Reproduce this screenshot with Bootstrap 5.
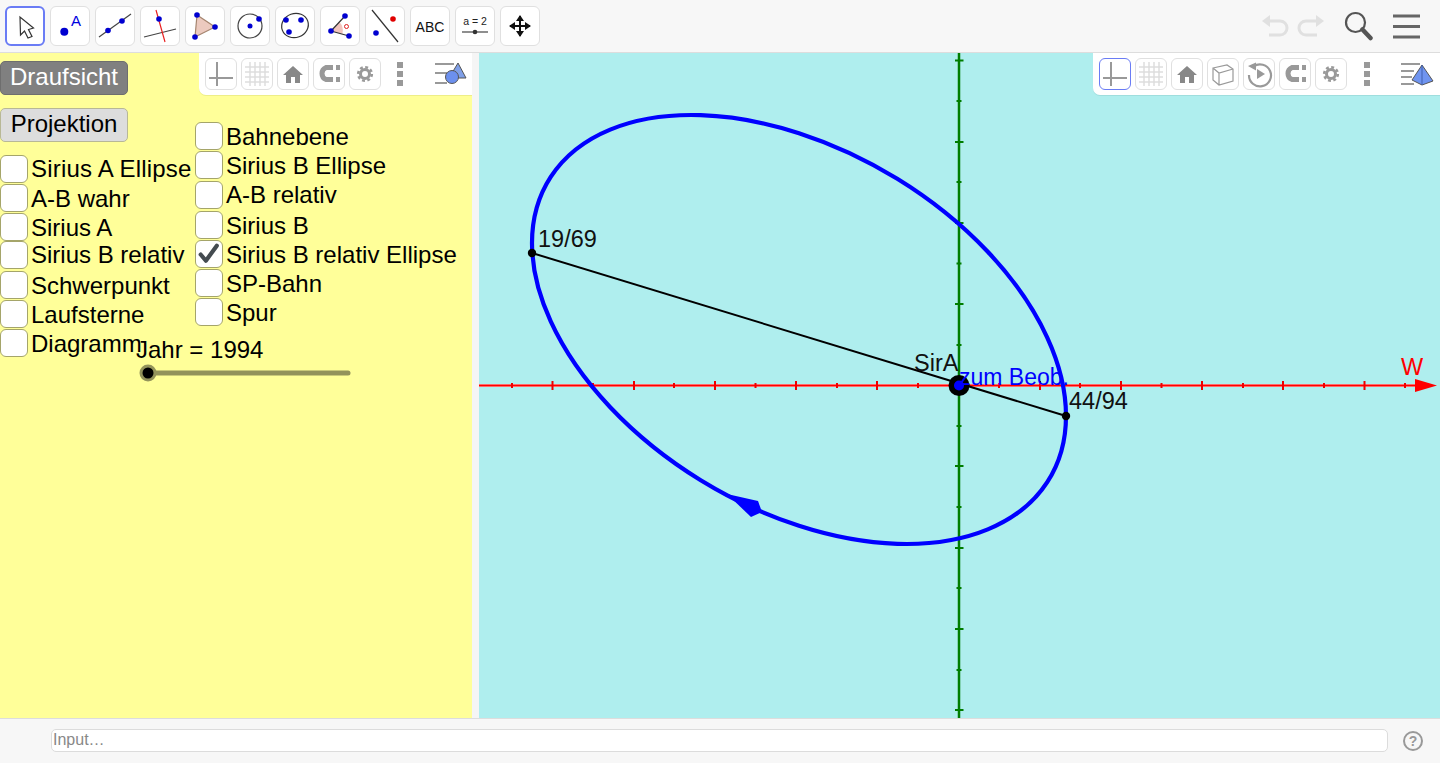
<!DOCTYPE html>
<html lang="de">
<head>
<meta charset="utf-8">
<title>Sirius</title>
<link href="https://cdn.jsdelivr.net/npm/bootstrap@5.3.0/dist/css/bootstrap.min.css" rel="stylesheet">
<style>
html,body{height:763px;overflow:hidden;margin:0;font-family:"Liberation Sans",Arial,sans-serif;color:#000}
.app-shell{height:763px}
.top-bar{height:53px;background:#f7f7f7;border-bottom:1px solid #ddd;padding:6px 5px 0;flex:none}
.tool-row{gap:5px}
.tool-btn{width:40px;height:40px;padding:0;background:#fff;border:1px solid #e0e0e0;border-radius:6px;flex:none;display:block}
.tool-btn svg{display:block}
.tool-btn.is-on{border:2px solid #6a7cf5}
.tool-btn.is-on svg{margin:-1px}
.top-right{margin-left:auto;margin-right:13px;height:40px}
.undo-ico{margin-right:8px}
.search-ico{margin-left:18px}
.menu-ico{margin-left:19px}
.work-area{height:665px;flex:none}
.algebra{width:472px;background:#ffff99;flex:none;overflow:hidden}
.splitter{width:7px;background:#f5f5f5;flex:none}
.graphics{flex:1 1 auto;background:#afeeee;overflow:hidden}
.graphics svg.plot{display:block;width:961px;height:665px}
.plot text{font-family:"Liberation Sans",Arial,sans-serif;font-size:23.5px}
.plot text.beob{font-size:23px}
.dock-bar{position:absolute;top:0;right:0;height:42px;background:#fff;border-bottom-left-radius:7px;padding:5px 0 0 6px;display:flex;gap:4px}
.dock-left{width:273px;box-shadow:0 1px 0 #eeee88}
.dock-right{width:347px;box-shadow:0 1px 0 #9fdede}
.dock-btn{width:32px;height:32px;background:#fff;border:1px solid #e0e0e0;border-radius:6px;padding:0;flex:none}
.dock-btn svg{display:block;margin:-1px}
.dock-btn.is-on{border-color:#6a7cf5}
.dock-view{position:absolute;top:5px;right:4px}
.dock-left .dots-pos{position:absolute;top:5px;left:186px}
.dock-right .dots-pos{position:absolute;top:5px;left:259px}
.gg-btn{position:absolute;left:0;width:128px;height:34px;padding:0 0 2px;border-radius:5px;font-size:24px;line-height:28px;text-align:center}
.btn-plan{top:8px;background:#808080;border:1px solid #6e6e6e;color:#fff}
.btn-proj{top:55px;background:#ddd;border:1px solid #b8b896;color:#000;padding-bottom:2px}
.gg-check{position:absolute;display:flex;gap:3px;align-items:flex-start;margin:0}
.gg-check input{appearance:none;-webkit-appearance:none;width:28px;height:28px;margin:0;background-color:#fff;border:1.500px solid #a5a56a;border-radius:6px;flex:none}
.gg-check input:checked{background:#fff url("data:image/svg+xml,%3Csvg xmlns='http://www.w3.org/2000/svg' viewBox='0 0 25 25'%3E%3Cpath d='M4.500 13l5 6L20 4.500' fill='none' stroke='%23444b50' stroke-width='4' stroke-linecap='round' stroke-linejoin='round'/%3E%3C/svg%3E") center/100% 100% no-repeat}
.gg-check span{font-size:24px;line-height:27px;white-space:nowrap;margin-top:1px}
.c1 span,.c4 span,.d3 span{margin-top:0}
.c1 span{letter-spacing:.2px}
.c1{left:0;top:102px}.c2{left:0;top:131px}.c3{left:0;top:160px}.c4{left:0;top:188px}.c5{left:0;top:218px}.c6{left:0;top:247px}.c7{left:0;top:276px}
.d1{left:195px;top:69px}.d2{left:195px;top:98px}.d3{left:195px;top:128px}.d4{left:195px;top:158px}.d5{left:195px;top:187px}.d6{left:195px;top:216px}.d7{left:195px;top:245px}
.year-label{position:absolute;left:136px;top:283px;font-size:24px;line-height:27px;white-space:nowrap}
.year-slider{position:absolute;left:139px;top:311px;width:213px;height:18px;display:block}
.bottom-bar{height:45px;background:#f7f7f7;border-top:1px solid #ddd;flex:none;padding:10px 0 0 51px}
.cmd-input{width:1337px;height:23px;border:1px solid #dcdcdc;border-radius:5px;padding:0 1px 2px;font-size:16px;line-height:19px;font-family:"Liberation Sans",Arial,sans-serif;background:#fff;flex:none;outline:0}
.cmd-input::placeholder{color:#888;opacity:1}
.help-ico{margin-left:14px;margin-top:1px;flex:none}
</style>
</head>
<body>
<div class="app-shell d-flex flex-column">
  <div class="top-bar d-flex">
    <div class="d-flex tool-row">
      <button class="tool-btn is-on" aria-label="Bewegen"><svg width="40" height="40" viewBox="0 0 40 40"><path d="M14 10L14.500 28L18.500 24L22 31L26 29.500L22.500 22.500L27.500 21Z" fill="#fff" stroke="#333" stroke-width="1.200"/></svg></button>
      <button class="tool-btn" aria-label="Punkt"><svg width="38" height="38" viewBox="1 1 38 38"><circle cx="14.300" cy="25.700" r="4" fill="#0000d0"/><text x="21" y="20" font-size="15" fill="#0000e0" font-family="Liberation Sans">A</text></svg></button>
      <button class="tool-btn" aria-label="Gerade"><svg width="38" height="38" viewBox="1 1 38 38"><path d="M4 31L36 8" stroke="#444" stroke-width="1.200"/><circle cx="13" cy="24.500" r="2.800" fill="#0000d0"/><circle cx="27" cy="15" r="2.800" fill="#0000d0"/></svg></button>
      <button class="tool-btn" aria-label="Senkrechte"><svg width="38" height="38" viewBox="1 1 38 38"><path d="M4 31L36 23" stroke="#444" stroke-width="1.200"/><path d="M16 4L25 36" stroke="#e82020" stroke-width="1.200"/><circle cx="19" cy="13" r="2.800" fill="#0000d0"/></svg></button>
      <button class="tool-btn" aria-label="Vieleck"><svg width="38" height="38" viewBox="1 1 38 38"><path d="M12 9L30 21L10 31Z" fill="#eccabf" stroke="#a5856f" stroke-width="1.200"/><circle cx="12" cy="9" r="2.800" fill="#0000d0"/><circle cx="30" cy="21" r="2.800" fill="#0000d0"/><circle cx="10" cy="31" r="2.800" fill="#0000d0"/></svg></button>
      <button class="tool-btn" aria-label="Kreis"><svg width="38" height="38" viewBox="1 1 38 38"><circle cx="20" cy="20" r="12" fill="none" stroke="#444" stroke-width="1.200"/><circle cx="20" cy="20" r="2.500" fill="#0000d0"/><circle cx="29" cy="13" r="2.800" fill="#0000d0"/></svg></button>
      <button class="tool-btn" aria-label="Ellipse"><svg width="38" height="38" viewBox="1 1 38 38"><ellipse cx="20" cy="19.500" rx="13.500" ry="12" transform="rotate(-20 20 19.500)" fill="none" stroke="#333" stroke-width="1.200"/><circle cx="11" cy="14" r="2.800" fill="#0000d0"/><circle cx="26" cy="14" r="2.800" fill="#0000d0"/><circle cx="14" cy="26" r="2.800" fill="#0000d0"/></svg></button>
      <button class="tool-btn" aria-label="Winkel"><svg width="38" height="38" viewBox="1 1 38 38"><path d="M11 25L19.500 16A13 13 0 0 1 22.500 27.700Z" fill="#f2c4bd"/><path d="M25 10L11 25L29 30" fill="none" stroke="#333" stroke-width="1.200"/><circle cx="25" cy="10" r="2.800" fill="#0000d0"/><circle cx="11" cy="25" r="2.800" fill="#0000d0"/><circle cx="29" cy="30" r="2.800" fill="#0000d0"/><circle cx="26.500" cy="20.500" r="2" fill="none" stroke="#e02020"/></svg></button>
      <button class="tool-btn" aria-label="Spiegeln"><svg width="38" height="38" viewBox="1 1 38 38"><path d="M7 4L33 36" stroke="#333" stroke-width="1.200"/><circle cx="28" cy="13" r="2.800" fill="#e00000"/><circle cx="11" cy="27" r="2.800" fill="#0000d0"/></svg></button>
      <button class="tool-btn" aria-label="Text"><svg width="38" height="38" viewBox="1 1 38 38"><text x="20" y="26" text-anchor="middle" font-size="14" fill="#111" font-family="Liberation Sans">ABC</text></svg></button>
      <button class="tool-btn" aria-label="Schieberegler"><svg width="38" height="38" viewBox="1 1 38 38"><text x="20" y="19" text-anchor="middle" font-size="10.500" fill="#222" font-family="Liberation Sans">a = 2</text><path d="M7 26H33" stroke="#444" stroke-width="1.200"/><circle cx="20" cy="26" r="2.300" fill="#333"/></svg></button>
      <button class="tool-btn" aria-label="Verschieben"><svg width="38" height="38" viewBox="1 1 38 38"><path d="M20 10V30M10 20H30" stroke="#111" stroke-width="2"/><path d="M20 9L16 15H24ZM20 31L16 25H24ZM9 20L15 16V24ZM31 20L25 16V24Z" fill="#111"/></svg></button>
    </div>
    <div class="top-right d-flex align-items-center">
      <svg class="undo-ico" width="28" height="24" viewBox="0 0 28 24"><path d="M7 7H19A7 7 0 0 1 19 21H8" fill="none" stroke="#e0e0e0" stroke-width="3"/><path d="M1 7L9 1V13Z" fill="#e0e0e0"/></svg>
      <svg width="28" height="24" viewBox="0 0 28 24"><path d="M21 7H9A7 7 0 0 0 9 21H20" fill="none" stroke="#e0e0e0" stroke-width="3"/><path d="M27 7L19 1V13Z" fill="#e0e0e0"/></svg>
      <svg class="search-ico" width="30" height="30" viewBox="0 0 30 30"><circle cx="12.500" cy="11.500" r="9.500" fill="none" stroke="#555" stroke-width="2.200"/><path d="M19.500 18.500L27.500 27" stroke="#555" stroke-width="4.500" stroke-linecap="round"/></svg>
      <svg class="menu-ico" width="30" height="26" viewBox="0 0 30 26"><path d="M1 3H28M1 13.500H28M1 24H28" stroke="#666" stroke-width="3.200"/></svg>
    </div>
  </div>

  <div class="work-area d-flex">
    <section class="algebra position-relative">
      <button class="gg-btn btn-plan">Draufsicht</button>
      <button class="gg-btn btn-proj">Projektion</button>
      <label class="gg-check c1"><input type="checkbox"><span>Sirius A Ellipse</span></label>
      <label class="gg-check c2"><input type="checkbox"><span>A-B wahr</span></label>
      <label class="gg-check c3"><input type="checkbox"><span>Sirius A</span></label>
      <label class="gg-check c4"><input type="checkbox"><span>Sirius B relativ</span></label>
      <label class="gg-check c5"><input type="checkbox"><span>Schwerpunkt</span></label>
      <label class="gg-check c6"><input type="checkbox"><span>Laufsterne</span></label>
      <label class="gg-check c7"><input type="checkbox"><span>Diagramm</span></label>
      <label class="gg-check d1"><input type="checkbox"><span>Bahnebene</span></label>
      <label class="gg-check d2"><input type="checkbox"><span>Sirius B Ellipse</span></label>
      <label class="gg-check d3"><input type="checkbox"><span>A-B relativ</span></label>
      <label class="gg-check d4"><input type="checkbox"><span>Sirius B</span></label>
      <label class="gg-check d5"><input type="checkbox" checked><span>Sirius B relativ Ellipse</span></label>
      <label class="gg-check d6"><input type="checkbox"><span>SP-Bahn</span></label>
      <label class="gg-check d7"><input type="checkbox"><span>Spur</span></label>
      <div class="year-label">Jahr = 1994</div>
      <svg class="year-slider" viewBox="139 311 213 18"><path d="M148 320H348" stroke="#93935b" stroke-width="5" stroke-linecap="round"/><circle cx="148" cy="320" r="8.500" fill="#93935b"/><circle cx="148" cy="320" r="5.500" fill="#000"/></svg>

      <div class="dock-bar dock-left">
        <button class="dock-btn" aria-label="Achsen"><svg width="32" height="32"><path d="M12 4V28M4 20H28" stroke="#999" stroke-width="2"/></svg></button>
        <button class="dock-btn" aria-label="Gitter"><svg width="32" height="32"><path d="M9 4V28M14 4V28M19 4V28M24 4V28M4 9H28M4 14H28M4 19H28M4 24H28" stroke="#dedede" stroke-width="1.500"/></svg></button>
        <button class="dock-btn" aria-label="Start"><svg width="32" height="32"><path d="M16 8L26 17H23V25H18V19H14V25H9V17H6Z" fill="#888"/></svg></button>
        <button class="dock-btn" aria-label="Magnet"><svg width="32" height="32"><path d="M20 9.500H13A6.500 6.500 0 0 0 13 21.500H20" fill="none" stroke="#999" stroke-width="5"/><path d="M23 9.500H27M23 21.500H27" stroke="#999" stroke-width="5"/></svg></button>
        <button class="dock-btn" aria-label="Einstellungen"><svg width="32" height="32"><circle cx="16" cy="16" r="4.500" fill="none" stroke="#999" stroke-width="3"/><circle cx="16" cy="16" r="6.800" fill="none" stroke="#999" stroke-width="2.600" stroke-dasharray="2.900 2.440"/></svg></button>
        <svg class="dots-pos" width="32" height="32"><path d="M12 4H18V10H12ZM12 13H18V19H12ZM12 22H18V28H12Z" fill="#999"/></svg>
        <svg class="dock-view" width="34" height="32" viewBox="0 0 34 32"><path d="M1 6H20M1 15H13M1 25H13" stroke="#999" stroke-width="2"/><path d="M24 5L32 20H15Z" fill="#7f9fe8" stroke="#555" stroke-width="1"/><circle cx="18" cy="19" r="6.500" fill="#6c90ee" stroke="#555" stroke-width="1"/></svg>
      </div>
    </section>
    <div class="splitter"></div>
    <section class="graphics position-relative">
      <svg class="plot" viewBox="479 53 961 665">
        <path d="M479 385.500H1427" stroke="#ff6a6a" stroke-width="3"/>
        <path d="M479 385.500H1427" stroke="#ff0000" stroke-width="1"/>
        <path d="M552.500 381V390M634 381V390M715 381V390M796 381V390M877 381V390M1040 381V390M1121 381V390M1202 381V390M1283 381V390M1364.500 381V390" stroke="#ee0000" stroke-width="2"/>
        <path d="M512 383V388M593 383V388M674 383V388M755.500 383V388M837 383V388M918 383V388M999 383V388M1080 383V388M1161.500 383V388M1243 383V388M1324 383V388M1405 383V388" stroke="#ee0000" stroke-width="2"/>
        <path d="M1415 379L1437 385.500L1415 392Z" fill="#ff0000"/>
        <text x="1401" y="375" fill="#ff0000">W</text>
        <path d="M959 53V718" stroke="#007d00" stroke-width="2.500"/>
        <path d="M955 60.500H963.500M955 142H963.500M955 223H963.500M955 304H963.500M955 466H963.500M955 548H963.500M955 629H963.500M955 710H963.500" stroke="#007d00" stroke-width="2"/>
        <path d="M956.500 101H961.500M956.500 182H961.500M956.500 263.500H961.500M956.500 345H961.500M956.500 426H961.500M956.500 507H961.500M956.500 588H961.500M956.500 670H961.500" stroke="#007d00" stroke-width="2"/>
        <circle r="1" transform="matrix(267 86.400 0 196.300 799 329.500)" fill="none" stroke="#0000ff" stroke-width="4.200" vector-effect="non-scaling-stroke"/>
        <path d="M727 494L758 501L762 512L751 517Z" fill="#0000ff"/>
        <path d="M532 253L1066 416" stroke="#000" stroke-width="2"/>
        <circle cx="532" cy="253" r="4.200" fill="#000"/>
        <circle cx="1066" cy="416" r="4.200" fill="#000"/>
        <circle cx="959" cy="385.500" r="10.500" fill="#000"/>
        <circle cx="959" cy="385.500" r="5" fill="#0000ff"/>
        <text x="538" y="247" fill="#111">19/69</text>
        <text x="1069" y="409" fill="#111">44/94</text>
        <text x="914" y="371" fill="#111">SirA</text>
        <text class="beob" x="959" y="385" fill="#0000ff">zum Beob.</text>
      </svg>
      <div class="dock-bar dock-right">
        <button class="dock-btn is-on" aria-label="Achsen"><svg width="32" height="32"><path d="M12 4V28M4 20H28" stroke="#999" stroke-width="2"/></svg></button>
        <button class="dock-btn" aria-label="Gitter"><svg width="32" height="32"><path d="M9 4V28M14 4V28M19 4V28M24 4V28M4 9H28M4 14H28M4 19H28M4 24H28" stroke="#dedede" stroke-width="1.500"/></svg></button>
        <button class="dock-btn" aria-label="Start"><svg width="32" height="32"><path d="M16 8L26 17H23V25H18V19H14V25H9V17H6Z" fill="#888"/></svg></button>
        <button class="dock-btn" aria-label="3D"><svg width="32" height="32"><path d="M6 10L20 7L26 11V23L12 27L6 22ZM6 10L12 15L26 11M12 15V27" fill="none" stroke="#999" stroke-width="1.200"/></svg></button>
        <button class="dock-btn" aria-label="Animation"><svg width="32" height="32"><path d="M10.500 8.500A11 11 0 1 1 6 17" fill="none" stroke="#999" stroke-width="2.200"/><path d="M5 8L13 4.500L13 12.500Z" fill="#999"/><path d="M14 11L22 16L14 21Z" fill="#999"/></svg></button>
        <button class="dock-btn" aria-label="Magnet"><svg width="32" height="32"><path d="M20 9.500H13A6.500 6.500 0 0 0 13 21.500H20" fill="none" stroke="#999" stroke-width="5"/><path d="M23 9.500H27M23 21.500H27" stroke="#999" stroke-width="5"/></svg></button>
        <button class="dock-btn" aria-label="Einstellungen"><svg width="32" height="32"><circle cx="16" cy="16" r="4.500" fill="none" stroke="#999" stroke-width="3"/><circle cx="16" cy="16" r="6.800" fill="none" stroke="#999" stroke-width="2.600" stroke-dasharray="2.900 2.440"/></svg></button>
        <svg class="dots-pos" width="32" height="32"><path d="M12 4H18V10H12ZM12 13H18V19H12ZM12 22H18V28H12Z" fill="#999"/></svg>
        <svg class="dock-view" width="36" height="32" viewBox="0 0 36 32"><path d="M1 6H20M1 13H14M1 19H12M1 26H14" stroke="#999" stroke-width="2"/><path d="M22 7L33 23L22 27L12 22Z" fill="#6f94f0" stroke="#555" stroke-width="1"/><path d="M22 7V27" stroke="#3f5fb0" stroke-width="1"/></svg>
      </div>
    </section>
  </div>

  <div class="bottom-bar d-flex">
    <input class="cmd-input" type="text" placeholder="Input…" aria-label="Input">
    <svg class="help-ico" width="22" height="22" viewBox="0 0 22 22"><circle cx="11" cy="11" r="9" fill="none" stroke="#999" stroke-width="2"/><text x="11" y="16" text-anchor="middle" font-size="14" font-weight="700" fill="#999" font-family="Liberation Sans">?</text></svg>
  </div>
</div>
<script src="https://cdn.jsdelivr.net/npm/bootstrap@5.3.0/dist/js/bootstrap.bundle.min.js"></script>
</body>
</html>
